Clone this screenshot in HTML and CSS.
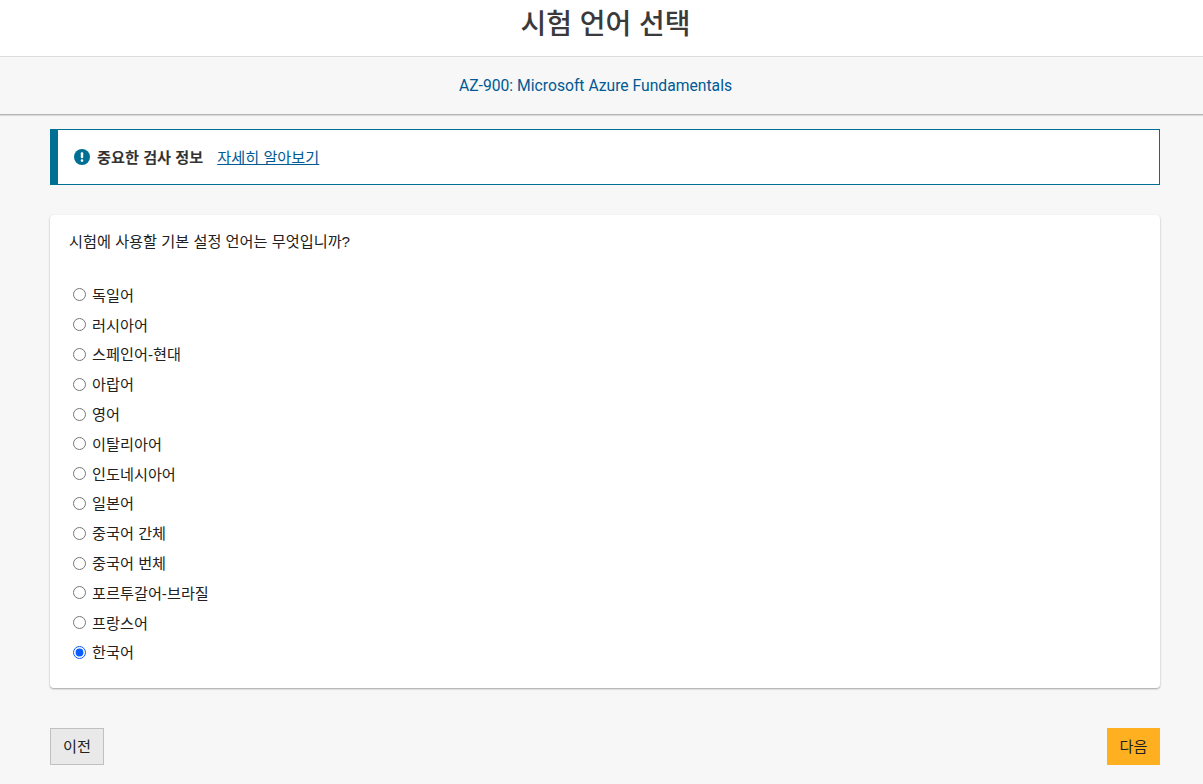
FILE: index.html
```html
<!DOCTYPE html>
<html lang="ko">
<head>
<meta charset="utf-8">
<title>시험 언어 선택</title>
<link rel="stylesheet" href="styles.css">
</head>
<body>
<header class="page-head"><h1 class="title">시험 언어 선택</h1></header>
<div class="subhead"><a class="exam-name">AZ-900: Microsoft Azure Fundamentals</a></div>
<main class="content">
  <div class="notice">
    <svg class="notice-icon" width="16" height="16" viewBox="0 0 16 16"><circle cx="8" cy="8" r="8" fill="#006f94"/><rect x="6.8" y="3.2" width="2.4" height="6" rx="1" fill="#fff"/><circle cx="8" cy="11.6" r="1.3" fill="#fff"/></svg>
    <strong class="notice-text">중요한 검사 정보</strong>
    <a class="notice-link" href="#">자세히 알아보기</a>
  </div>
  <section class="card">
    <p class="question">시험에 사용할 기본 설정 언어는 무엇입니까?</p>
    <div class="options">
      <label class="option"><input type="radio" name="l">독일어</label>
      <label class="option"><input type="radio" name="l">러시아어</label>
      <label class="option"><input type="radio" name="l">스페인어-현대</label>
      <label class="option"><input type="radio" name="l">아랍어</label>
      <label class="option"><input type="radio" name="l">영어</label>
      <label class="option"><input type="radio" name="l">이탈리아어</label>
      <label class="option"><input type="radio" name="l">인도네시아어</label>
      <label class="option"><input type="radio" name="l">일본어</label>
      <label class="option"><input type="radio" name="l">중국어 간체</label>
      <label class="option"><input type="radio" name="l">중국어 번체</label>
      <label class="option"><input type="radio" name="l">포르투갈어-브라질</label>
      <label class="option"><input type="radio" name="l">프랑스어</label>
      <label class="option"><input type="radio" name="l" checked>한국어</label>
    </div>
  </section>
  <div class="actions">
    <button class="btn btn-prev">이전</button>
    <button class="btn btn-next">다음</button>
  </div>
</main>
</body>
</html>
```
FILE: styles.css
```css
* { box-sizing: border-box; }
html, body { margin: 0; padding: 0; }
body {
  background: #f7f7f7;
  color: #212121;
  font-family: "Liberation Sans", "Noto Sans CJK KR", sans-serif;
  font-size: 15.2px;
  height: 784px;
  overflow: hidden;
}
.page-head {
  background: #fff;
  height: 57px;
  border-bottom: 1px solid #dcdcdc;
  text-align: center;
  padding-left: 8px;
}
.title {
  margin: 0;
  font-size: 28px;
  font-weight: 500;
  line-height: 50px;
  color: #3a3a3a;
}
.subhead {
  height: 58px;
  background: #f7f7f7;
  border-bottom: 1px solid #b4b4b4;
  box-shadow: 0 1px 1px rgba(0,0,0,.1);
  text-align: center;
  line-height: 57px;
  padding-right: 12px;
}
.exam-name { color: #005a94; font-size: 15.7px; font-family: Roboto, sans-serif; }
.content { padding: 14px 43px 0 50px; }
.notice {
  display: flex;
  align-items: center;
  height: 56px;
  background: #fff;
  border: 1px solid #006f94;
  border-left-width: 8px;
  padding-left: 16px;
}
.notice-icon { margin-right: 7px; }
.notice-text { font-size: 15.2px; color: #333; margin-bottom: 2px; }
.notice-link { margin-left: 14px; color: #005a94; font-size: 15.2px; margin-bottom: 2px; }
.card {
  margin-top: 30px;
  height: 473px;
  background: #fff;
  border-radius: 4px;
  box-shadow: 0 1px 2px rgba(0,0,0,.35);
  padding: 17px 19px;
}
.question { margin: 0 0 27px; font-size: 15.2px; line-height: 20px; }
.options { display: flex; flex-direction: column; }
.option { display: flex; align-items: center; height: 29.8px; font-size: 15.2px; padding-left: 4px; }
.option input { margin: 2px 6px 0 0; width: 13px; height: 13px; accent-color: #0a5cff; }
.actions { display: flex; justify-content: space-between; margin-top: 40px; }
.btn { height: 37px; font-size: 15.2px; font-family: inherit; color: #212121; padding: 0 12px 3px; }
.btn-prev { background: #e9e9e9; border: 1px solid #c0c0c0; }
.btn-next { background: #ffb020; border: 0; padding: 0 12.5px 3px; }
```
